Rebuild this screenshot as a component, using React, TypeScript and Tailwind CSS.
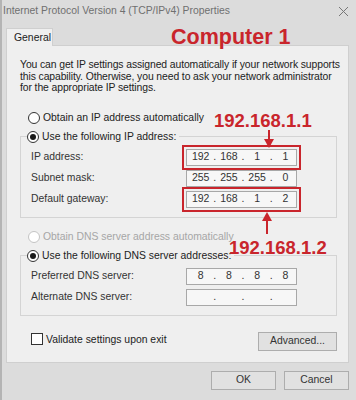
import React from "react";

const font = { fontFamily: '"Liberation Sans", Arial, sans-serif' };

function Radio({ checked, disabled }: { checked?: boolean; disabled?: boolean }) {
  return (
    <span
      className={`flex h-[12px] w-[12px] shrink-0 items-center justify-center rounded-full border bg-white ${
        disabled ? "border-[#c4c4c4]" : "border-[#333]"
      }`}
    >
      {checked && <span className="h-[6px] w-[6px] rounded-full bg-[#1a1a1a]" />}
    </span>
  );
}

function IpField({ parts, boxed }: { parts: string[]; boxed?: boolean }) {
  return (
    <div
      className={`flex h-[17px] w-[111px] items-center border border-[#a8a8a8] bg-[#f7f7f7] pl-[3px] text-[10.5px] text-[#333] ${
        boxed ? "outline-2 outline-offset-[2px] outline-[#c9252c]" : ""
      }`}
    >
      {parts.map((p, i) => (
        <React.Fragment key={i}>
          <span className="w-[22px] text-center">{p}</span>
          {i < 3 && <span className="w-[7px] text-center">.</span>}
        </React.Fragment>
      ))}
    </div>
  );
}

function Row({ label, parts, boxed }: { label: string; parts: string[]; boxed?: boolean }) {
  return (
    <div className="flex h-[21px] items-center justify-between pl-[10px] pr-[39px]">
      <span className="text-[10.4px] text-[#333]">{label}</span>
      <IpField parts={parts} boxed={boxed} />
    </div>
  );
}

function Button({ children, w }: { children: React.ReactNode; w: string }) {
  return (
    <div
      className={`flex h-[19px] ${w} items-center justify-center border border-[#adadad] bg-[#e1e1e1] text-[10.4px] text-[#333]`}
    >
      {children}
    </div>
  );
}

export default function App() {
  return (
    <div
      className="relative h-[400px] w-[356px] overflow-hidden border-l-2 border-[#b4b4b4] bg-[#dcdcdc]"
      style={font}
    >
      {/* title bar */}
      <div className="flex h-[22px] items-center justify-between pl-[1px] pr-[6px]">
        <span className="text-[10.4px] text-[#707070]">
          Internet Protocol Version 4 (TCP/IPv4) Properties
        </span>
        <svg width="11" height="11" viewBox="0 0 11 11" className="mr-[1px]">
          <path d="M1 1 L10 10 M10 1 L1 10" stroke="#777" strokeWidth="1" />
        </svg>
      </div>

      {/* tab */}
      <div className="mt-[6px] pl-[4px]">
        <div className="relative z-10 -mb-px flex h-[18px] w-[47px] items-center border border-b-0 border-[#cfcfcf] bg-[#efefef] pl-[7px] text-[10.4px] text-[#222]">
          General
        </div>
      </div>

      {/* panel */}
      <div className="ml-[4px] mr-[7px] border border-[#cfcfcf] bg-[#efefef] pl-[13px] pr-[11px] pb-[11px] pt-[13px]">
        <p className="whitespace-nowrap text-[10.4px] leading-[11.5px] tracking-[-0.1px] text-[#222]">
          You can get IP settings assigned automatically if your network supports
          <br />
          this capability. Otherwise, you need to ask your network administrator
          <br />
          for the appropriate IP settings.
        </p>

        <div className="mt-[17px] flex h-[14px] items-center gap-[3px] pl-[8px] text-[10.4px] text-[#222]">
          <Radio />
          <span>Obtain an IP address automatically</span>
        </div>

        <fieldset className="mt-[5px] border border-[#d4d4d4] pb-[7px] pt-[3px]">
          <legend className="ml-[6px] flex h-[14px] items-center gap-[3px] bg-[#efefef] pr-[3px] text-[10.4px] text-[#222]">
            <Radio checked />
            <span>Use the following IP address:</span>
          </legend>
          <Row label="IP address:" parts={["192", "168", "1", "1"]} boxed />
          <Row label="Subnet mask:" parts={["255", "255", "255", "0"]} />
          <Row label="Default gateway:" parts={["192", "168", "1", "2"]} boxed />
        </fieldset>

        <div className="mt-[12px] flex h-[14px] items-center gap-[3px] pl-[8px] text-[10.4px] text-[#a6a6a6]">
          <Radio disabled />
          <span>Obtain DNS server address automatically</span>
        </div>

        <fieldset className="mt-[5px] border border-[#d4d4d4] pb-[7px] pt-[3px]">
          <legend className="ml-[6px] flex h-[14px] items-center gap-[3px] bg-[#efefef] pr-[3px] text-[10.4px] text-[#222]">
            <Radio checked />
            <span>Use the following DNS server addresses:</span>
          </legend>
          <Row label="Preferred DNS server:" parts={["8", "8", "8", "8"]} />
          <Row label="Alternate DNS server:" parts={["", "", "", ""]} />
        </fieldset>

        <div className="mt-[16px] flex items-start justify-between">
          <div className="flex items-center gap-[3px] pl-[11px] text-[10.4px] text-[#222]">
            <span className="h-[12px] w-[12px] border border-[#333] bg-white" />
            <span>Validate settings upon exit</span>
          </div>
          <Button w="w-[79px]">Advanced...</Button>
        </div>
      </div>

      {/* dialog buttons */}
      <div className="mt-[8px] flex justify-end gap-[8px] pr-[7px]">
        <Button w="w-[65px]">OK</Button>
        <Button w="w-[65px]">Cancel</Button>
      </div>

      {/* annotations */}
      <div className="absolute left-[169px] top-[21px] text-[21.5px] font-bold text-[#c9252c]">
        Computer 1
      </div>
      <div className="absolute left-[212px] top-[107px] text-[18.5px] font-bold text-[#c9252c]">
        192.168.1.1
      </div>
      <svg className="absolute left-[261px] top-[130px]" width="12" height="18" viewBox="0 0 12 18">
        <path d="M6 0 V10" stroke="#c9252c" strokeWidth="2" />
        <path d="M1 9 L11 9 L6 18 Z" fill="#c9252c" />
      </svg>
      <svg className="absolute left-[259px] top-[212px]" width="12" height="22" viewBox="0 0 12 22">
        <path d="M6 8 V22" stroke="#c9252c" strokeWidth="2" />
        <path d="M6 0 L11 9 L1 9 Z" fill="#c9252c" />
      </svg>
      <div className="absolute left-[227px] top-[234px] text-[18.5px] font-bold text-[#c9252c]">
        192.168.1.2
      </div>
    </div>
  );
}
